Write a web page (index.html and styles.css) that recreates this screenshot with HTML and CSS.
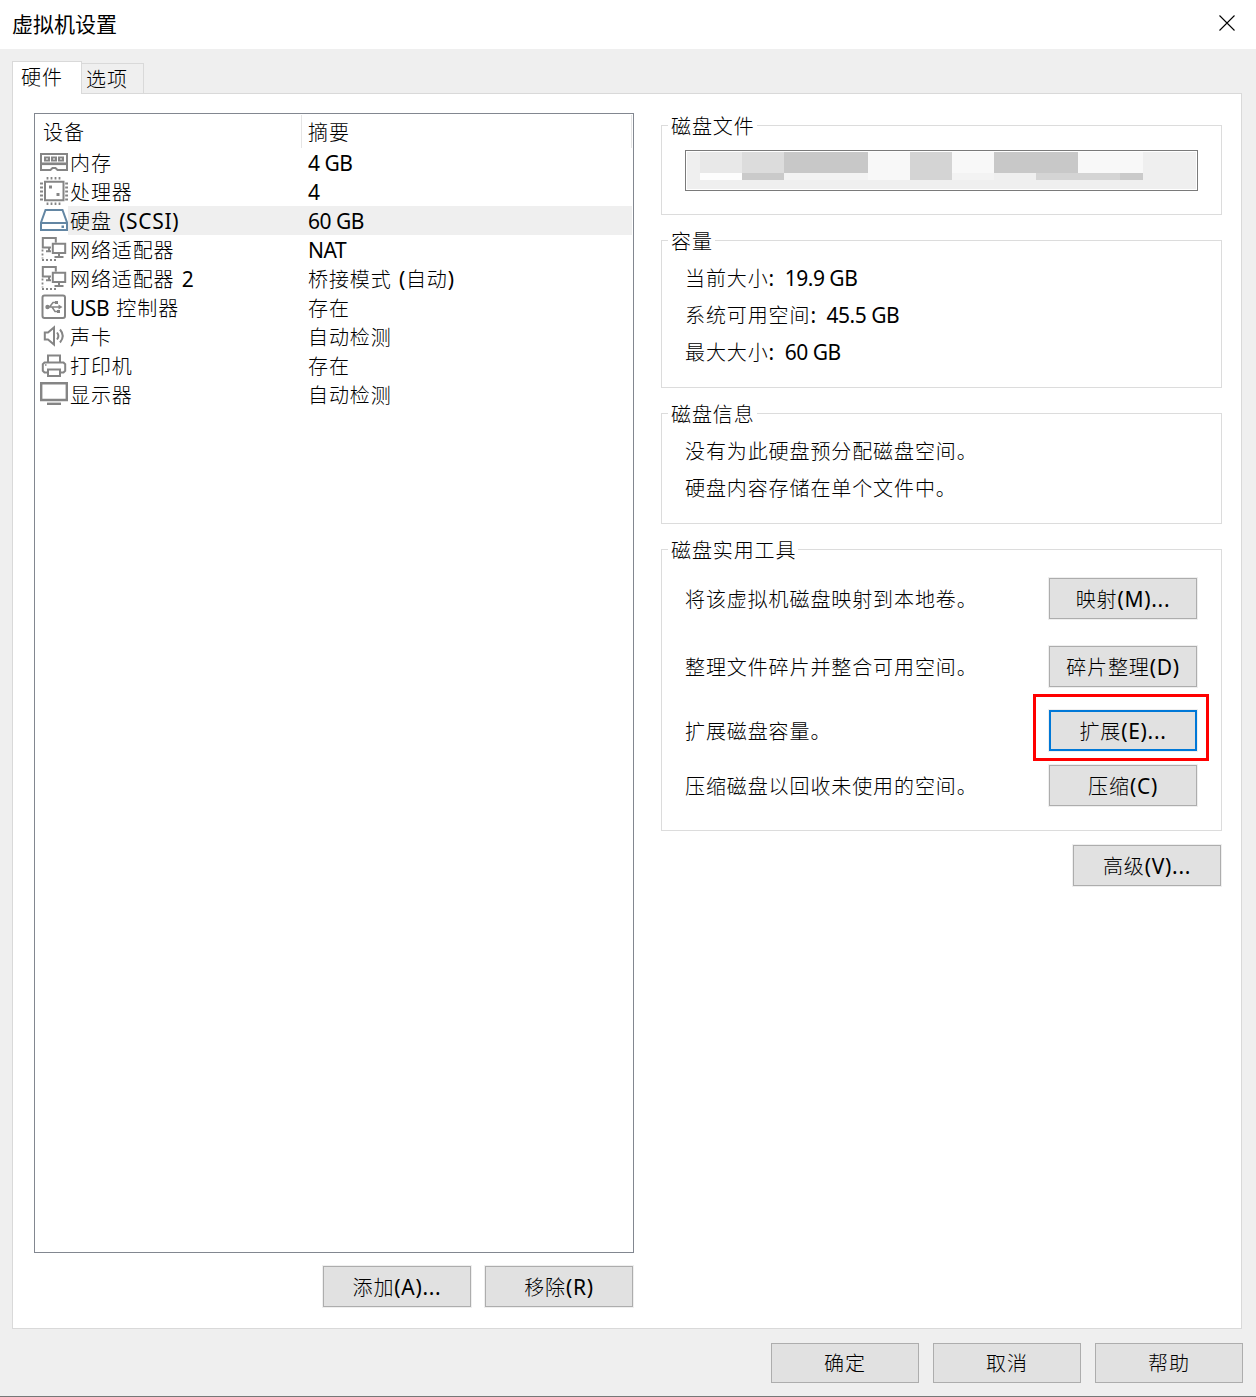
FILE: index.html
```html
<!DOCTYPE html>
<html lang="zh-CN">
<head>
<meta charset="utf-8">
<title>虚拟机设置</title>
<link rel="stylesheet" href="styles.css">
</head>
<body>
<div class="dialog">
  <header class="titlebar">
    <h1 class="title">虚拟机设置</h1>
    <svg class="close" width="16" height="16" viewBox="0 0 16 16"><path d="M.5 .5l15 15M15.5 .5l-15 15" stroke="#000" stroke-width="1.1" fill="none"/></svg>
  </header>
  <nav class="tabs">
    <div class="tab tab-active">硬件</div>
    <div class="tab">选项</div>
  </nav>
  <main class="panel">
    <section class="devices">
      <div class="list">
        <div class="list-head"><span class="head-device">设备</span><span class="head-summary">摘要</span></div>
        <div class="row">
          <svg class="icon" viewBox="0 0 28 29"><path d="M1 6h26v9.500H1zM1 15v7h9.500l2-2h3l2 2H27v-7"/><path d="M0 16h28" stroke-width="2.200"/><path d="M5 9.500h4v3H5zM12 9.500h4v3h-4zM19 9.500h4v3h-4z" stroke-width="2"/></svg>
          <span class="name">内存</span><span class="summary"><span class="en">4 GB</span></span>
        </div>
        <div class="row">
          <svg class="icon" viewBox="0 0 28 29"><path d="M5 4.700h18.500v18.500H5z"/><path d="M7.500 0v2.500M11.500 0v2.500M15.500 0v2.500M19.500 0v2.500M7.500 25.500V28M11.500 25.500V28M15.500 25.500V28M19.500 25.500V28M0 6.500h3M0 10.500h3M0 14.500h3M0 18.500h3M0 22.500h3M25.200 6.500h3M25.200 10.500h3M25.200 14.500h3M25.200 18.500h3M25.200 22.500h3" stroke-width="1.800"/><path d="M9 8.500h3v3H9zM16.500 16h3v3h-3z" fill="#858585" stroke="none"/></svg>
          <span class="name">处理器</span><span class="summary"><span class="en">4</span></span>
        </div>
        <div class="row row-selected">
          <svg class="icon icon-disk" viewBox="0 0 28 29"><path d="M1 16.500L5.500 4h17L27 16.500V24H1zM1 17h26"/><path d="M21.500 19.500h2.500v2.500h-2.500z" fill="#6386a3" stroke="none"/></svg>
          <span class="name">硬盘 <span class="en wide">(SCSI)</span></span><span class="summary"><span class="en">60 GB</span></span>
        </div>
        <div class="row">
          <svg class="icon" viewBox="0 0 28 29"><path d="M11 12.500H2.800V3h13v4.500M12.800 8.800h12.400v9.200H12.800zM19 18v3.500M14.500 22h9M9 12.500V16M6 16.200h5"/><path d="M2.500 14.500v9M2 25h16" stroke-width="1.800" stroke-dasharray="2 2"/></svg>
          <span class="name">网络适配器</span><span class="summary"><span class="en">NAT</span></span>
        </div>
        <div class="row">
          <svg class="icon" viewBox="0 0 28 29"><path d="M11 12.500H2.800V3h13v4.500M12.800 8.800h12.400v9.200H12.800zM19 18v3.500M14.500 22h9M9 12.500V16M6 16.200h5"/><path d="M2.500 14.500v9M2 25h16" stroke-width="1.800" stroke-dasharray="2 2"/></svg>
          <span class="name">网络适配器 <span class="en">2</span></span><span class="summary">桥接模式 <span class="en wide">(</span>自动<span class="en wide">)</span></span>
        </div>
        <div class="row">
          <svg class="icon" viewBox="0 0 28 29"><rect x="2.500" y="2.500" width="22.500" height="22.500" rx="2"/><path d="M7 14h12M9.500 14l3.500-4.500h3M12 14l3 4.500h2.500" stroke-width="1.500"/><path d="M18.500 11.500l4 2.500-4 2.500zM15 8h3v3h-3zM17 17h3v3h-3z" fill="#858585" stroke="none"/><circle cx="7.500" cy="14" r="2.200" fill="#858585" stroke="none"/></svg>
          <span class="name"><span class="en">USB</span> 控制器</span><span class="summary">存在</span>
        </div>
        <div class="row">
          <svg class="icon" viewBox="0 0 28 29"><path d="M4.800 10.500H8l6-5v17l-6-5H4.800z"/><path d="M17 10.500q2.800 3.500 0 7M20 7.500q5.500 6.500 0 13"/></svg>
          <span class="name">声卡</span><span class="summary">自动检测</span>
        </div>
        <div class="row">
          <svg class="icon" viewBox="0 0 28 29"><path d="M8 11.500V4.500h12v7M8 21.500H4.500l-1.700-1.700v-6.600l1.700-1.700h19l1.700 1.700v6.600l-1.700 1.700H20M8 18.500h12v6.500H8z"/><path d="M5 14h1.500" stroke-width="1.500"/></svg>
          <span class="name">打印机</span><span class="summary">存在</span>
        </div>
        <div class="row">
          <svg class="icon" viewBox="0 0 28 29"><path d="M1.200 3.200h25.600v16.800H1.200z" stroke-width="2.400"/><path d="M7 23.800h14" stroke-width="2.400"/></svg>
          <span class="name">显示器</span><span class="summary">自动检测</span>
        </div>
      </div>
      <div class="list-actions">
        <button class="btn">添加<span class="en">(A)...</span></button>
        <button class="btn">移除<span class="en">(R)</span></button>
      </div>
    </section>
    <section class="details">
      <div class="group group-file">
        <h2 class="legend">磁盘文件</h2>
        <div class="field">
          <svg class="mosaic" width="509" height="37" viewBox="0 0 509 37" shape-rendering="crispEdges">
            <path fill="#e8e8e8" d="M13 0h42v21H13z"/><path fill="#dcdcdc" d="M55 0h42v21H55z"/><path fill="#c8c8c8" d="M97 0h84v21H97zM307 0h84v21h-84z"/><path fill="#f8f8f8" d="M181 0h42v28h-42zM265 0h42v21h-42zM391 0h65v21h-65z"/><path fill="#d4d4d4" d="M223 0h42v28h-42zM349 21h84v7h-84z"/><path fill="#fdfdfd" d="M13 21h42v7H13z"/><path fill="#cacaca" d="M55 21h42v7H55zM433 21h23v7h-23z"/><path fill="#f3f3f3" d="M97 21h84v7H97zM265 21h42v7h-42z"/>
          </svg>
        </div>
      </div>
      <div class="group group-capacity">
        <h2 class="legend">容量</h2>
        <p class="line">当前大小<span class="en colon">:</span><span class="en">19.9 GB</span></p>
        <p class="line">系统可用空间<span class="en colon">:</span><span class="en">45.5 GB</span></p>
        <p class="line">最大大小<span class="en colon">:</span><span class="en">60 GB</span></p>
      </div>
      <div class="group group-info">
        <h2 class="legend">磁盘信息</h2>
        <p class="line">没有为此硬盘预分配磁盘空间。</p>
        <p class="line">硬盘内容存储在单个文件中。</p>
      </div>
      <div class="group group-tools">
        <h2 class="legend">磁盘实用工具</h2>
        <div class="tool tool-map"><span>将该虚拟机磁盘映射到本地卷。</span><button class="btn">映射<span class="en">(M)...</span></button></div>
        <div class="tool tool-defrag"><span>整理文件碎片并整合可用空间。</span><button class="btn">碎片整理<span class="en">(D)</span></button></div>
        <div class="tool tool-expand"><span>扩展磁盘容量。</span><div class="marked"><button class="btn btn-default">扩展<span class="en">(E)...</span></button></div></div>
        <div class="tool"><span>压缩磁盘以回收未使用的空间。</span><button class="btn">压缩<span class="en">(C)</span></button></div>
      </div>
      <button class="btn btn-advanced">高级<span class="en">(V)...</span></button>
    </section>
  </main>
  <footer class="footer">
    <button class="btn">确定</button>
    <button class="btn">取消</button>
    <button class="btn">帮助</button>
  </footer>
</div>
</body>
</html>
```
FILE: styles.css
```css
* { box-sizing: border-box; }
body {
  margin: 0;
  font: 300 20px/29px "Noto Sans CJK SC", sans-serif;
  letter-spacing: 0.9px;
  color: #000;
}
h1, h2, p { margin: 0; font-weight: inherit; font-size: inherit; }
.en {
  font-family: "Noto Sans", sans-serif;
  font-weight: 400;
  font-size: 21px;
  letter-spacing: -0.5px;
  word-spacing: 0;
  line-height: 1;
}
.wide { letter-spacing: 0.7px; }
.dialog {
  display: flex;
  flex-direction: column;
  width: 1256px;
  height: 1397px;
  background: #efefef;
  border-bottom: 1px solid #777;
}
.titlebar {
  display: flex;
  justify-content: space-between;
  align-items: center;
  height: 49px;
  padding: 0 21px 3px 12px;
  background: #fff;
}
.title { font-size: 21px; font-weight: 400; letter-spacing: 0; }
.tabs {
  display: flex;
  align-items: flex-end;
  position: relative;
  height: 45px;
  padding-left: 12px;
}
.tab {
  width: 62px;
  height: 31px;
  padding-left: 4px;
  border: 1px solid #d9d9d9;
  border-left: 0;
  line-height: 30px;
}
.tab-active {
  width: 70px;
  height: 33px;
  padding-left: 8px;
  border-left: 1px solid #d9d9d9;
  border-bottom: 0;
  background: #fff;
}
.panel {
  display: flex;
  gap: 27px;
  width: 1230px;
  height: 1236px;
  margin: -1px 0 0 12px;
  padding: 19px 19px 0 21px;
  border: 1px solid #d9d9d9;
  background: #fff;
}
.devices { width: 600px; }
.list { height: 1140px; border: 1px solid #828790; }
.list-head {
  display: flex;
  height: 34px;
  padding: 1px 1px 0 0;
  line-height: 34px;
}
.head-device { width: 267px; padding-left: 8px; border-right: 1px solid #e5e5e5; }
.head-summary { flex: 1; padding-left: 6px; border-right: 1px solid #e5e5e5; }
.row {
  display: flex;
  height: 29px;
  margin-right: 1px;
  padding-left: 5px;
  line-height: 30px;
  word-spacing: 2px;
}
.row-selected { background: linear-gradient(90deg, #fff 33px, #efefef 33px); }
.icon {
  width: 28px;
  height: 29px;
  margin-right: 2px;
  fill: none;
  stroke: #858585;
  stroke-width: 2;
}
.icon-disk { stroke: #6386a3; }
.name { width: 238px; white-space: nowrap; }
.list-actions {
  display: flex;
  justify-content: flex-end;
  gap: 14px;
  padding: 13px 1px 0 0;
}
.btn {
  width: 148px;
  height: 41px;
  padding: 0 0 1px;
  border: 1px solid #adadad;
  background: #e1e1e1;
  box-shadow: 0 0 0 1px #efefef;
  font: inherit;
  letter-spacing: inherit;
  color: inherit;
}
.btn .en { letter-spacing: 0.7px; }
.btn-default { border: 2px solid #0078d7; }
.details {
  display: flex;
  flex-direction: column;
  gap: 25px;
  width: 561px;
  padding-top: 12px;
}
.group { border: 1px solid #dcdcdc; padding: 0 24px 0 23px; }
.group-file { height: 90px; }
.group-capacity { height: 148px; }
.group-info { height: 111px; }
.group-tools { height: 282px; }
.legend {
  width: fit-content;
  height: 28px;
  margin: -14px 0 0 -17px;
  padding: 0 2px 0 3px;
  background: #fff;
  line-height: 28px;
}
.field {
  width: 513px;
  height: 41px;
  margin-top: 10px;
  padding: 1px;
  border: 1px solid #7a7a7a;
}
.mosaic { display: block; background: #efefef; }
.line { height: 37px; line-height: 37px; }
.group-capacity .legend { margin-bottom: 4px; }
.group-info .legend { margin-bottom: 4px; }
.colon { margin-right: 11px; }
.tool {
  display: flex;
  justify-content: space-between;
  align-items: center;
  height: 41px;
}
.tool-map { margin: 14px 0 27px; }
.tool-defrag { margin-bottom: 23px; }
.tool-expand { margin-bottom: 14px; }
.marked {
  margin: -16px -12px -10px 0;
  padding: 13px 9px 7px 13px;
  width: 176px;
  height: 67px;
  border: 3px solid #f00;
}
.marked .btn { display: block; }
.btn-advanced { align-self: flex-end; margin: -11px 1px 0 0; }
.footer {
  display: flex;
  justify-content: flex-end;
  gap: 14px;
  padding: 14px 13px 0 0;
}
.footer .btn { height: 40px; box-shadow: none; }
```
